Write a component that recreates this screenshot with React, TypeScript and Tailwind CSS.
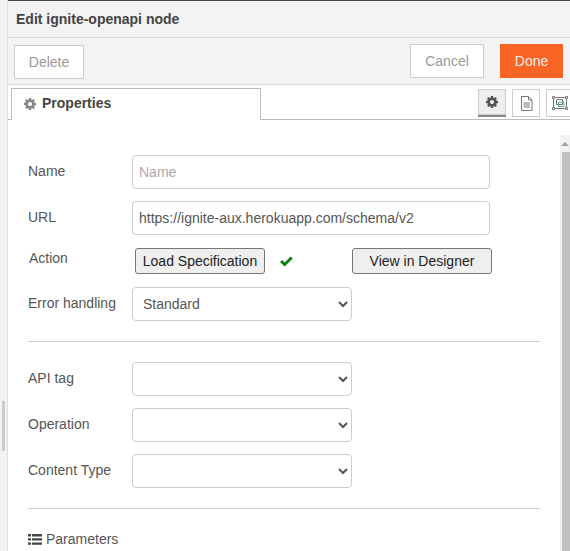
import React from "react";

const selectClass =
  "h-[34px] w-[220px] rounded-[4px] border border-[#ccc] bg-white pl-[6px] text-[14px] text-[#555] outline-none";

const Cog = ({ className }: { className: string }) => (
  <svg viewBox="0 0 1536 1536" className={className} fill="currentColor">
    <path d="M1024 768q0-106-75-181t-181-75-181 75-75 181 75 181 181 75 181-75 75-181zm512-109v222q0 12-8 23t-20 13l-185 28q-19 54-39 91 35 50 107 138 10 12 10 25t-9 23q-27 37-99 108t-94 71q-12 0-26-9l-138-108q-44 23-91 38-16 136-29 186-7 28-36 28h-222q-14 0-24.5-8.5t-11.5-21.5l-28-184q-49-16-90-37l-141 107q-10 9-25 9-14 0-25-11-126-114-165-168-7-10-7-23 0-12 8-23 15-21 51-66.5t54-70.5q-27-50-41-99l-183-27q-13-2-21-12.5t-8-23.5v-222q0-12 8-23t19-13l186-28q14-46 39-92-40-57-107-138-10-12-10-24 0-10 9-23 26-36 98.5-107.5t94.5-71.5q13 0 26 10l138 107q44-23 91-38 16-136 29-186 7-28 36-28h222q14 0 24.5 8.5t11.5 21.5l28 184q49 16 90 37l142-107q9-9 24-9 13 0 25 10 129 119 165 170 7 8 7 22 0 12-8 23-15 21-51 66.5t-54 70.5q26 50 41 98l183 28q13 2 21 12.5t8 23.5z" />
  </svg>
);

const Row = ({ label, children, className }: { label: string; children: React.ReactNode; className?: string }) => (
  <div className={`flex items-center ${className ?? ""}`}>
    <label className="mb-[2px] w-[104px] shrink-0 text-[14px] leading-[20px] text-[#555]">{label}</label>
    {children}
  </div>
);

export default function App() {
  return (
    <div className="flex h-[551px] w-[570px] overflow-hidden bg-white font-['Liberation_Sans',Arial,sans-serif]">
      <div className="relative w-[8px] shrink-0 border-r border-[#ddd] bg-[#f3f3f3]">
        <div className="absolute left-[2px] top-[401px] h-[50px] w-[3px] bg-[#ccc]" />
      </div>
      <div className="flex min-w-0 flex-1 flex-col">
        <div className="h-[1px] bg-[#444]" />
        <div className="flex h-[37px] items-center border-b border-[#ddd] bg-[#f3f3f3] pl-[8px] text-[14px] font-bold text-[#444]">
          Edit ignite-openapi node
        </div>
        <div className="flex h-[47px] items-center justify-between border-b border-[#ddd] bg-[#f3f3f3] pl-[6px] pr-[7px]">
          <button className="mt-[2px] h-[34px] w-[70px] border border-[#ccc] bg-white text-[14px] text-[#999]">Delete</button>
          <div className="flex items-center gap-[16px]">
            <button className="h-[34px] w-[74px] border border-[#ccc] bg-white text-[14px] text-[#999]">Cancel</button>
            <button className="h-[34px] w-[63px] bg-[#f76423] text-[14px] text-[#eee]">Done</button>
          </div>
        </div>
        <div className="flex h-[35px] items-end justify-between border-b border-[#bbb] pl-[3px]">
          <div className="relative -mb-[1px] flex h-[32px] w-[250px] items-center gap-[6px] border border-b-0 border-[#bbb] bg-white pb-[2px] pl-[12px] text-[14px] font-bold text-[#444]">
            <Cog className="h-[12px] w-[12px] text-[#888]" />
            Properties
          </div>
          <div className="mb-[2px] flex gap-[6px]">
            <div className="flex h-[28px] w-[28px] items-center justify-center border-b-[2px] border-[#888] bg-[#eee] shadow-[inset_0_0_0_1px_#ccc]">
              <Cog className="h-[12px] w-[12px] text-[#555]" />
            </div>
            <div className="flex h-[28px] w-[28px] items-center justify-center border border-[#ccc]">
              <svg viewBox="0 0 13 15" className="h-[15px] w-[13px]" fill="none" stroke="#777" strokeWidth="1">
                <path d="M1.5.5h7l3.5 3.5v10.5h-10.5zM8.5.5v3.5h3.5M3.5 7h6.5M3.5 9h6.5M3.5 11h6.5" />
              </svg>
            </div>
            <div className="flex h-[28px] w-[24px] items-center justify-start border border-r-0 border-[#ccc] pl-[5px]">
              <svg viewBox="0 0 16 14" className="h-[14px] w-[16px] shrink-0" fill="none" stroke="#777" strokeWidth="1">
                <path d="M1.5 1.5h13v11h-13z" />
                <path d="M4.5 3.5h6v5h-6z" />
                <path d="M6.5 6h5.5v4.5h-5.5z" stroke="#6a8" />
                <path d="M.5.5h2v2h-2zM13.5.5h2v2h-2zM.5 11.5h2v2h-2zM13.5 11.5h2v2h-2z" fill="#fff" />
              </svg>
            </div>
          </div>
        </div>
        <div className="relative flex-1 overflow-hidden pl-[20px] pr-[30px] pt-[35px]">
          <div className="flex flex-col">
            <Row label="Name">
              <input
                readOnly
                placeholder="Name"
                className="h-[34px] w-[358px] rounded-[4px] border border-[#ccc] bg-white px-[6px] text-[14px] text-[#555] outline-none placeholder:text-[#aaa]"
              />
            </Row>
            <Row label="URL" className="mt-[12px]">
              <input
                readOnly
                value="https://ignite-aux.herokuapp.com/schema/v2"
                className="h-[34px] w-[358px] rounded-[4px] border border-[#ccc] bg-white px-[6px] text-[14px] text-[#555] outline-none"
              />
            </Row>
            <div className="mt-[13px] flex h-[26px] items-center">
              <label className="mb-[6px] ml-[1px] w-[103px] shrink-0 text-[14px] leading-[20px] text-[#555]">Action</label>
              <button className="ml-[3px] h-[26px] w-[130px] rounded-[3px] border border-[#767676] bg-[#efefef] text-[14px] text-[#222]">
                Load Specification
              </button>
              <svg viewBox="0 0 14 12" className="ml-[15px] h-[11px] w-[13px]" fill="#0a7d0a">
                <path d="M0 6.5 2.2 4.3 5 7 11.6 0.6 13.8 2.8 5 11.4z" />
              </svg>
              <button className="ml-[59px] h-[26px] w-[140px] rounded-[3px] border border-[#767676] bg-[#efefef] text-[14px] text-[#222]">
                View in Designer
              </button>
            </div>
            <Row label="Error handling" className="mt-[13px]">
              <select className={selectClass} defaultValue="Standard">
                <option>Standard</option>
              </select>
            </Row>
            <hr className="mt-[20px] border-[#ccc]" />
            <Row label="API tag" className="mt-[20px]">
              <select className={selectClass} />
            </Row>
            <Row label="Operation" className="mt-[12px]">
              <select className={selectClass} />
            </Row>
            <Row label="Content Type" className="mt-[12px]">
              <select className={selectClass} />
            </Row>
            <hr className="mt-[20px] border-[#ccc]" />
            <div className="mt-[20px] flex items-center gap-[4px] text-[14px] leading-[20px] text-[#555]">
              <svg viewBox="0 0 14 11" className="h-[11px] w-[14px]" fill="#444">
                <path d="M0 0h3v2.4H0zM4 0h10v2.4H4zM0 4.2h3v2.4H0zM4 4.2h10v2.4H4zM0 8.4h3v2.4H0zM4 8.4h10v2.4H4z" />
              </svg>
              Parameters
            </div>
          </div>
          <div className="absolute bottom-0 right-0 top-[15px] w-[10px] bg-[#f1f1f1]">
            <div className="flex h-[17px] items-center justify-center">
              <div className="h-0 w-0 border-x-[4px] border-b-[4px] border-x-transparent border-b-[#a3a3a3]" />
            </div>
            <div className="ml-[2px] h-full bg-[#c1c1c1]" />
          </div>
        </div>
      </div>
    </div>
  );
}
